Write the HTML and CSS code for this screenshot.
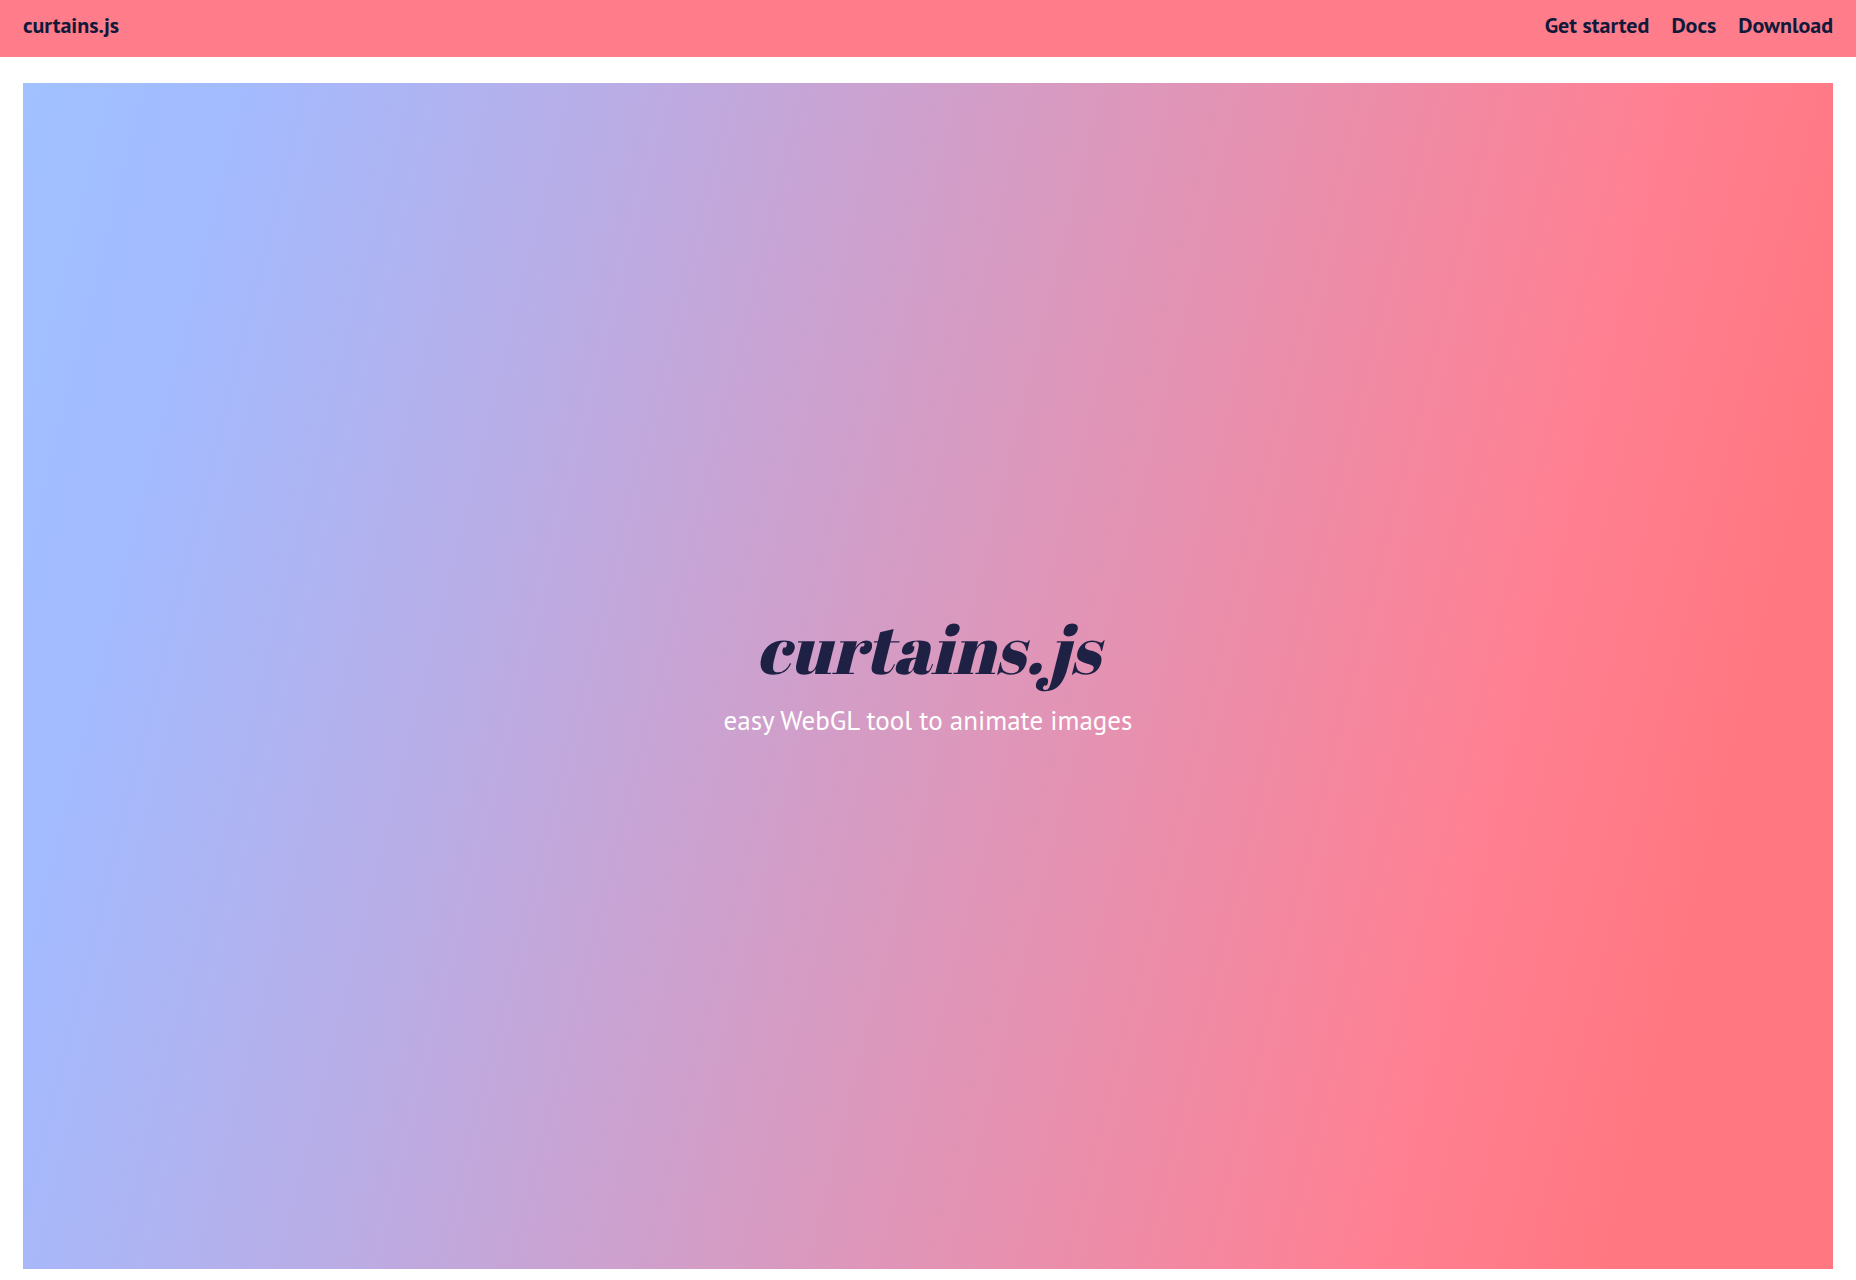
FILE: index.html
```html
<!DOCTYPE html>
<html lang="en">
<head>
  <meta charset="UTF-8">
  <meta name="viewport" content="width=device-width, initial-scale=1.0">
  <title>curtains.js</title>
  <link rel="stylesheet" href="styles.css">
</head>
<body>
  <header class="header">
    <a class="logo" href="#">curtains.js</a>
    <nav class="nav">
      <a href="#">Get started</a>
      <a href="#">Docs</a>
      <a href="#">Download</a>
    </nav>
  </header>

  <main class="hero">
    <h1 class="title">curtains.js</h1>
    <p class="tagline">easy WebGL tool to animate images</p>
  </main>
</body>
</html>
```
FILE: styles.css
```css
* {
  box-sizing: border-box;
}
body {
  margin: 0;
  min-height: 100vh;
  display: flex;
  flex-direction: column;
  background-color: white;
  font-family: "PT Sans", "Noto Sans", sans-serif;
  color: #10193a;
}
.header {
  display: flex;
  justify-content: space-between;
  padding: 10px 23px 17px;
  background-color: #ff7d8a;
  font-size: 22px;
  line-height: 30px;
  font-weight: bold;
}
.header a {
  color: inherit;
  text-decoration: none;
}
.header a:hover {
  text-decoration: underline;
}
.nav {
  display: flex;
  gap: 22px;
}
.hero {
  flex: 1;
  display: flex;
  flex-direction: column;
  align-items: center;
  justify-content: center;
  margin: 26px 23px 11px;
  text-align: center;
  background: linear-gradient(104deg, #a1c1ff 0%, #a3bbff 10%, #b9ade6 28%, #dd97bb 53%, #ff8092 78%, #ff7780 90%);
}
.title {
  margin: 0;
  font-family: "Abril Fatface", "DejaVu Serif", serif;
  font-size: 69px;
  line-height: 68px;
  font-weight: normal;
  font-style: italic;
  color: #1e2044;
}
.tagline {
  margin: 20px 0 0;
  font-size: 27px;
  line-height: 36px;
  color: white;
}
```
